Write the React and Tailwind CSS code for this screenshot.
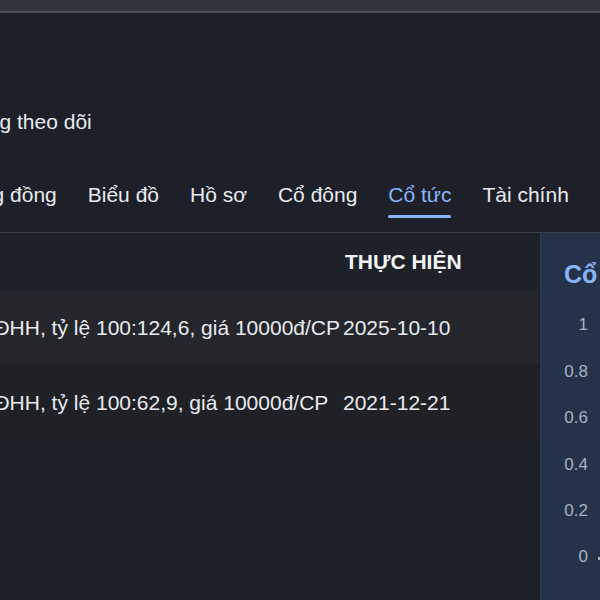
const tabs = ['Cộng đồng', 'Biểu đồ', 'Hồ sơ', 'Cổ đông', 'Cổ tức', 'Tài chính', 'Chỉ số'];

const rows = [
    { desc: 'Phát hành cho CĐHH, tỷ lệ 100:124,6, giá 10000đ/CP', date: '2025-10-10', bg: 'bg-[#24262c]' },
    { desc: 'Phát hành cho CĐHH, tỷ lệ 100:62,9, giá 10000đ/CP', date: '2021-12-21', bg: 'bg-[#1f2127]' },
];

const ticks = ['1', '0.8', '0.6', '0.4', '0.2', '0'];

function Tabs() {
    return (
        <div className="mt-[49px] -ml-[46px] flex gap-[31px] whitespace-nowrap">
            {tabs.map((t) => {
                const active = t === 'Cổ tức';
                return (
                    <div key={t} className="flex flex-col shrink-0">
                        <span className={`leading-[24px] ${active ? 'text-[#8ab4f8]' : 'text-[#e8eaed]'}`}>{t}</span>
                        <span className={`mt-[8px] h-[3px] rounded-sm ${active ? 'bg-[#8ab4f8]' : 'bg-transparent'}`}></span>
                    </div>
                );
            })}
        </div>
    );
}

function DividendTable() {
    return (
        <div className="-ml-[162px] w-[701px] shrink-0 flex flex-col">
            <div className="grid grid-cols-[505px_196px] h-[57px] items-center bg-[#1e2128]">
                <div className="pl-4 font-bold text-[#e8eaed]">MÔ TẢ</div>
                <div className="pl-[2px] font-bold text-[#f1f3f4]">THỰC HIỆN</div>
            </div>
            {rows.map((r) => (
                <div key={r.date} className={`grid grid-cols-[505px_196px] h-[75px] items-center ${r.bg}`}>
                    <div className="whitespace-nowrap">{r.desc}</div>
                    <div>{r.date}</div>
                </div>
            ))}
        </div>
    );
}

function ChartPanel() {
    return (
        <div className="w-[300px] shrink-0 bg-[#243349] border-l border-[#2a3a52] pl-[23px] pt-[26px]">
            <h3 className="text-[25px] leading-[30px] font-bold text-[#8ab4f8]">Cổ tức tiền mặt</h3>
            <div className="mt-[13px] -ml-[23px] flex">
                <div className="w-[47px] flex flex-col text-[17px] text-[#a9b1bf]">
                    {ticks.map((t) => (
                        <div key={t} className="h-[46.4px] flex items-center justify-end">{t}</div>
                    ))}
                </div>
                <div className="ml-[10px] flex flex-col justify-end pb-[20px]">
                    <span className="w-[4px] h-[3px] bg-[#a9b1bf]"></span>
                </div>
            </div>
        </div>
    );
}

export default function App() {
    return (
        <div className="w-[600px] h-[600px] overflow-hidden bg-[#1d2029] flex flex-col font-['Liberation_Sans',Arial,sans-serif] text-[21px] text-[#e8eaed]">
            <div className="h-[11px] bg-[#31353e] shrink-0"></div>
            <div className="h-[2px] bg-[#4b5059] shrink-0"></div>
            <div className="border-b border-[#3b3f47] shrink-0 pb-[14px]">
                <div className="mt-[97px] -ml-[39px] leading-[24px] whitespace-nowrap">Đang theo dõi</div>
                <Tabs />
            </div>
            <div className="flex flex-1 min-h-0">
                <div className="w-[540px] shrink-0 flex">
                    <DividendTable />
                </div>
                <ChartPanel />
            </div>
        </div>
    );
}
